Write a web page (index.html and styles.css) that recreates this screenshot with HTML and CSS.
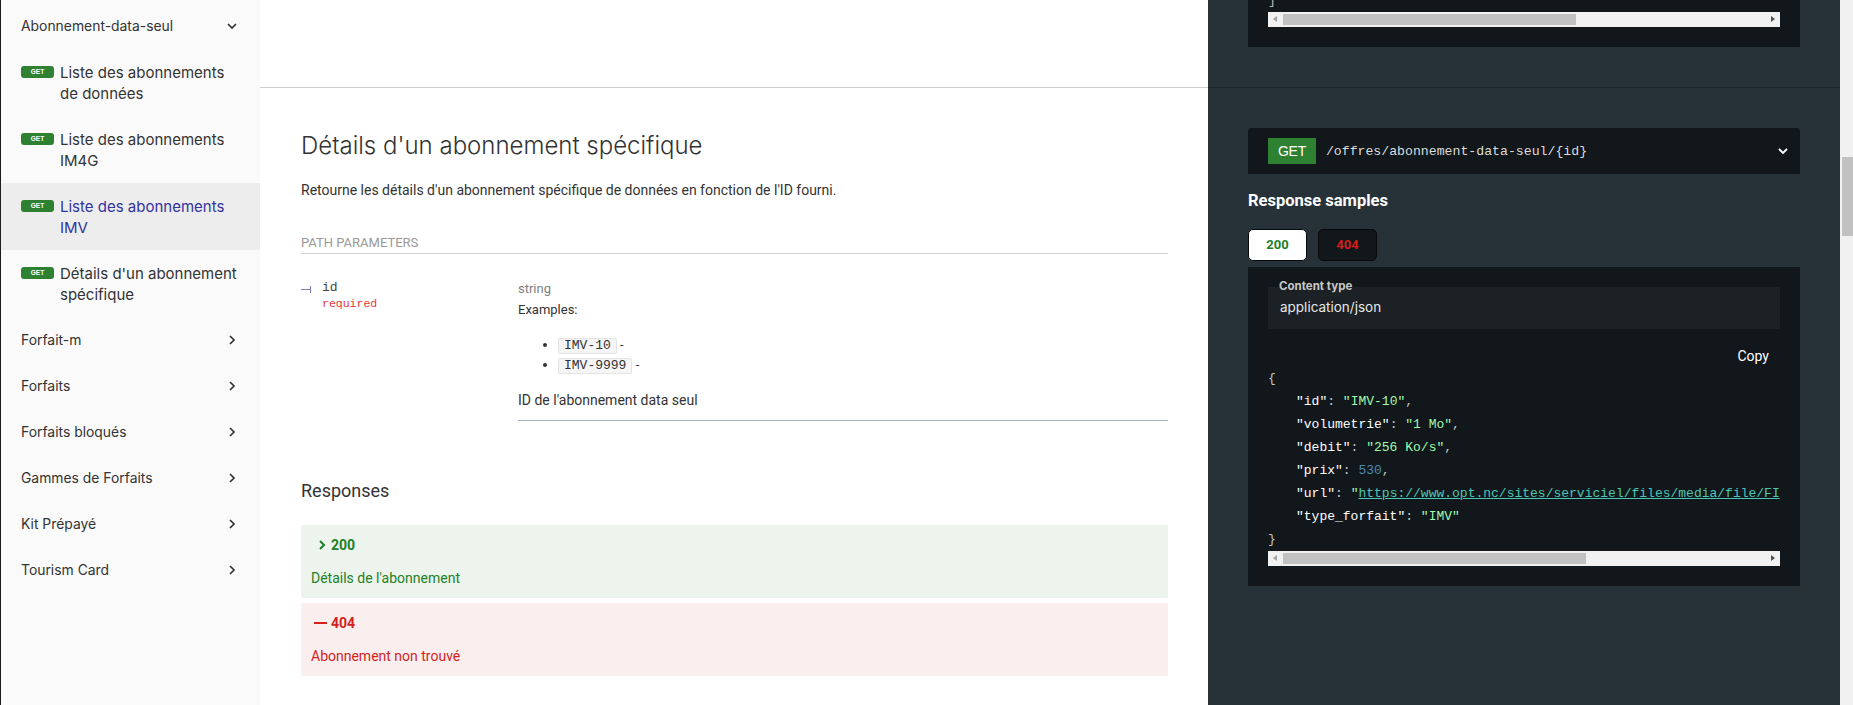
FILE: index.html
```html
<!DOCTYPE html>
<html lang="fr">
<head>
<meta charset="utf-8">
<title>Abonnement-data-seul</title>
<link rel="stylesheet" href="styles.css">
</head>
<body>
<div class="app">
  <nav class="sidebar">
    <ul class="menu">
      <li class="menu-item cat">
        <span class="cat-label">Abonnement-data-seul</span>
        <svg class="shelf" width="10" height="10" viewBox="0 0 10 10"><polyline points="1,3 5,7 9,3" /></svg>
      </li>
      <li class="menu-item op"><span class="badge">GET</span><span class="op-label">Liste des abonnements de données</span></li>
      <li class="menu-item op"><span class="badge">GET</span><span class="op-label">Liste des abonnements IM4G</span></li>
      <li class="menu-item op active"><span class="badge">GET</span><span class="op-label">Liste des abonnements IMV</span></li>
      <li class="menu-item op"><span class="badge">GET</span><span class="op-label">Détails d'un abonnement spécifique</span></li>
      <li class="menu-item cat"><span class="cat-label">Forfait-m</span><svg class="shelf" width="10" height="10" viewBox="0 0 10 10"><polyline points="3,1 7,5 3,9" /></svg></li>
      <li class="menu-item cat"><span class="cat-label">Forfaits</span><svg class="shelf" width="10" height="10" viewBox="0 0 10 10"><polyline points="3,1 7,5 3,9" /></svg></li>
      <li class="menu-item cat"><span class="cat-label">Forfaits bloqués</span><svg class="shelf" width="10" height="10" viewBox="0 0 10 10"><polyline points="3,1 7,5 3,9" /></svg></li>
      <li class="menu-item cat"><span class="cat-label">Gammes de Forfaits</span><svg class="shelf" width="10" height="10" viewBox="0 0 10 10"><polyline points="3,1 7,5 3,9" /></svg></li>
      <li class="menu-item cat"><span class="cat-label">Kit Prépayé</span><svg class="shelf" width="10" height="10" viewBox="0 0 10 10"><polyline points="3,1 7,5 3,9" /></svg></li>
      <li class="menu-item cat"><span class="cat-label">Tourism Card</span><svg class="shelf" width="10" height="10" viewBox="0 0 10 10"><polyline points="3,1 7,5 3,9" /></svg></li>
    </ul>
  </nav>

  <main class="content">
    <section class="row row-prev">
      <div class="mid"></div>
      <div class="right">
        <div class="code-box prev-box">
          <div class="code-end"><span>]</span></div>
          <div class="hscroll">
            <span class="arrow arrow-left"></span>
            <div class="track"><div class="thumb thumb-prev"></div></div>
            <span class="arrow arrow-right"></span>
          </div>
        </div>
      </div>
    </section>

    <section class="row row-op">
      <div class="mid">
        <h2 class="op-title">Détails d'un abonnement spécifique</h2>
        <p class="op-desc">Retourne les détails d'un abonnement spécifique de données en fonction de l'ID fourni.</p>

        <h5 class="params-title">Path Parameters</h5>
        <div class="param">
          <div class="param-name">
            <span class="bullet"></span>
            <div class="name-text">
              <span class="pname">id</span>
              <span class="required">required</span>
            </div>
          </div>
          <div class="param-details">
            <div class="ptype">string</div>
            <div class="examples-label">Examples:</div>
            <ul class="examples">
              <li><code class="chip">IMV-10</code> -</li>
              <li><code class="chip">IMV-9999</code> -</li>
            </ul>
            <p class="pdesc">ID de l'abonnement data seul</p>
          </div>
        </div>

        <h3 class="responses-title">Responses</h3>
        <div class="resp resp-ok">
          <div class="resp-head">
            <svg class="resp-chev" width="8" height="12" viewBox="0 0 8 12"><polyline points="2,2 6,6 2,10" /></svg>
            <strong>200</strong>
          </div>
          <p class="resp-desc">Détails de l'abonnement</p>
        </div>
        <div class="resp resp-err">
          <div class="resp-head">
            <span class="resp-dash"></span>
            <strong>404</strong>
          </div>
          <p class="resp-desc">Abonnement non trouvé</p>
        </div>
      </div>

      <div class="right">
        <div class="endpoint">
          <span class="http-verb">GET</span>
          <span class="endpoint-path">/offres/abonnement-data-seul/{id}</span>
          <svg class="endpoint-chev" width="12" height="12" viewBox="0 0 12 12"><polyline points="2,4 6,8 10,4" /></svg>
        </div>

        <h3 class="samples-title">Response samples</h3>
        <ul class="tabs">
          <li class="tab tab-ok selected">200</li>
          <li class="tab tab-err">404</li>
        </ul>

        <div class="code-box sample-box">
          <div class="ctype">
            <span class="ctype-label">Content type</span>
            <span class="ctype-value">application/json</span>
          </div>
          <div class="copy-row"><span class="copy">Copy</span></div>
          <div class="json">
            <div class="jl"><span class="p">{</span></div>
            <div class="jl ind"><span class="k">"id"</span><span class="p">: </span><span class="s">"IMV-10"</span><span class="p">,</span></div>
            <div class="jl ind"><span class="k">"volumetrie"</span><span class="p">: </span><span class="s">"1 Mo"</span><span class="p">,</span></div>
            <div class="jl ind"><span class="k">"debit"</span><span class="p">: </span><span class="s">"256 Ko/s"</span><span class="p">,</span></div>
            <div class="jl ind"><span class="k">"prix"</span><span class="p">: </span><span class="n">530</span><span class="p">,</span></div>
            <div class="jl ind"><span class="k">"url"</span><span class="p">: </span><span class="s">"</span><a class="lnk">https://www.opt.nc/sites/serviciel/files/media/file/FI</a></div>
            <div class="jl ind"><span class="k">"type_forfait"</span><span class="p">: </span><span class="s">"IMV"</span></div>
            <div class="jl"><span class="p">}</span></div>
          </div>
          <div class="hscroll">
            <span class="arrow arrow-left"></span>
            <div class="track"><div class="thumb thumb-cur"></div></div>
            <span class="arrow arrow-right"></span>
          </div>
        </div>
      </div>
    </section>
  </main>

  <div class="vscroll"><div class="vthumb"></div></div>
</div>
</body>
</html>
```

FILE: styles.css
```css
* { box-sizing: border-box; }

html, body {
  margin: 0;
  padding: 0;
}

body {
  width: 1853px;
  height: 705px;
  overflow: hidden;
  font-family: Roboto, "Liberation Sans", sans-serif;
  font-size: 14px;
  color: #333;
  background: #fff;
}

.app {
  display: flex;
  height: 705px;
}

/* ---------- Sidebar ---------- */
.sidebar {
  flex: 0 0 260px;
  background: #fafafa;
  border-left: 1px solid #1c1c1c;
  padding-top: 3px;
  overflow: hidden;
}

.menu {
  list-style: none;
  margin: 0;
  padding: 0;
}

.menu-item {
  display: flex;
  align-items: flex-start;
  padding: 12.5px 20px 12.5px 20px;
  font-family: Inter, "Open Sans", sans-serif;
  font-size: 15px;
  line-height: 21px;
  color: #333;
}

.menu-item.cat {
  justify-content: space-between;
  align-items: center;
  font-size: 13.9px;
  padding-right: 23px;
}

.menu-item.active {
  background: #ededed;
  color: #32329f;
}

.shelf {
  flex: 0 0 auto;
}

.shelf polyline {
  fill: none;
  stroke: #333;
  stroke-width: 1.7;
}

.badge {
  flex: 0 0 33px;
  height: 12px;
  margin-top: 4px;
  margin-right: 6px;
  background: #2f8132;
  color: #fff;
  border-radius: 3px;
  font-family: "Liberation Sans", sans-serif;
  font-size: 6.5px;
  font-weight: bold;
  line-height: 12px;
  text-align: center;
}

.op-label {
  flex: 1 1 auto;
}

/* ---------- Content ---------- */
.content {
  flex: 0 0 1580px;
  min-width: 0;
  display: flex;
  flex-direction: column;
}

.row {
  display: flex;
  min-width: 0;
}

.mid {
  flex: 0 0 948px;
  min-width: 0;
  background: #fff;
  padding: 40px 40px 40px 41px;
}

.right {
  flex: 0 0 632px;
  min-width: 0;
  background: #263238;
  padding: 40px;
  color: #fff;
}

.row-prev {
  flex: 0 0 88px;
}

.row-prev .mid {
  padding: 0;
  border-bottom: 1px solid #cccccc;
}

.row-prev .right {
  padding: 0 40px;
  border-bottom: 1px solid #1e282d;
}

.row-op {
  flex: 1 1 auto;
  min-height: 0;
}

/* middle op */
.op-title {
  margin: 0;
  font-family: Inter, "Open Sans", sans-serif;
  font-weight: 300;
  font-size: 24px;
  line-height: 35px;
  color: #333;
}

.op-desc {
  margin: 17px 0 0;
  font-size: 14px;
  line-height: 21px;
}

.params-title {
  margin: 32px 0 0;
  font-size: 13px;
  font-weight: normal;
  text-transform: uppercase;
  color: #999;
  line-height: 20px;
  border-bottom: 1px solid #d0d0d0;
}

.param {
  display: flex;
  margin-top: 14px;
}

.param-name {
  flex: 0 0 217px;
  display: flex;
  align-items: flex-start;
  padding-top: 11px;
}

.bullet {
  position: relative;
  flex: 0 0 10px;
  height: 1px;
  margin-top: 10px;
  background: #7c7cbb;
}

.bullet::after {
  content: "";
  position: absolute;
  right: 0;
  top: -3px;
  width: 1px;
  height: 7px;
  background: #7c7cbb;
}

.name-text {
  display: flex;
  flex-direction: column;
  margin-left: 11px;
}

.pname {
  font-family: "Liberation Mono", monospace;
  font-size: 13px;
  line-height: 18px;
  color: #444;
}

.required {
  font-family: "Liberation Mono", monospace;
  font-size: 11.5px;
  line-height: 14px;
  color: #e53935;
}

.param-details {
  flex: 1 1 auto;
  padding: 11px 0 10px;
  border-bottom: 1px solid #9fb4be;
}

.ptype {
  font-size: 13px;
  line-height: 20px;
  color: #808080;
}

.examples-label {
  font-size: 13px;
  line-height: 22px;
  color: #333;
}

.examples {
  margin: 14px 0 0;
  padding-left: 40px;
  font-size: 13px;
  line-height: 20px;
}

.chip {
  display: inline-block;
  font-family: "Liberation Mono", monospace;
  font-size: 13px;
  line-height: 14px;
  padding: 0 5px;
  background: #f5f5f5;
  border: 1px solid #e4e4e4;
  border-radius: 2px;
  color: #333;
}

.pdesc {
  margin: 15px 0 0;
  font-size: 14px;
  line-height: 20px;
}

.responses-title {
  margin: 56px 0 0;
  font-size: 18px;
  font-weight: normal;
  line-height: 28px;
  color: #333;
}

.resp {
  margin-top: 20px;
  padding: 10px;
  border-radius: 2px;
}

.resp + .resp {
  margin-top: 5px;
}

.resp-ok {
  background: #edf4ee;
  color: #1d8127;
}

.resp-err {
  background: #fbeeee;
  color: #d41f1c;
}

.resp-head {
  display: flex;
  align-items: center;
  height: 20px;
  font-size: 14px;
}

.resp-chev {
  margin: 0 5px 0 7px;
}

.resp-chev polyline {
  fill: none;
  stroke: #1d8127;
  stroke-width: 2;
}

.resp-dash {
  display: inline-block;
  width: 13px;
  height: 2px;
  margin: 0 4px 0 3px;
  background: #d41f1c;
}

.resp-desc {
  margin: 13px 0 0;
  font-size: 14px;
  line-height: 20px;
}

/* ---------- Right panel ---------- */
.code-box {
  background: #11171a;
  padding: 0 20px 20px;
}

.code-end {
  height: 12px;
  display: flex;
  align-items: flex-end;
  overflow: hidden;
  font-family: "Liberation Mono", monospace;
  font-size: 13px;
  color: rgba(255, 255, 255, 0.7);
}

.code-end span {
  line-height: 23px;
}

.hscroll {
  display: flex;
  align-items: center;
  height: 15px;
  background: #f1f1f1;
}

.arrow {
  flex: 0 0 15px;
  height: 15px;
  position: relative;
}

.arrow::after {
  content: "";
  position: absolute;
  top: 4px;
  width: 0;
  height: 0;
  border-top: 3.5px solid transparent;
  border-bottom: 3.5px solid transparent;
}

.arrow-left::after {
  left: 5px;
  border-right: 4px solid #a3a3a3;
}

.arrow-right::after {
  left: 6px;
  border-left: 4px solid #505050;
}

.track {
  flex: 1 1 auto;
  height: 15px;
  padding: 2px 0;
}

.thumb {
  height: 11px;
  background: #c1c1c1;
}

.thumb-prev { width: 293px; }
.thumb-cur { width: 303px; }

.endpoint {
  display: flex;
  align-items: center;
  height: 46px;
  padding: 10px 11px 10px 20px;
  background: #11171a;
  border-radius: 4px 4px 0 0;
}

.http-verb {
  height: 26px;
  padding: 0 10px;
  background: #2f8132;
  color: #fff;
  font-family: "Liberation Sans", sans-serif;
  font-size: 14px;
  line-height: 26px;
  letter-spacing: -0.3px;
}

.endpoint-path {
  margin-left: 10px;
  flex: 1 1 auto;
  font-family: "Liberation Mono", monospace;
  font-size: 13.2px;
  color: #ddd;
}

.endpoint-chev polyline {
  fill: none;
  stroke: #fff;
  stroke-width: 1.8;
}

.samples-title {
  margin: 16px 0 0;
  font-size: 16.5px;
  font-weight: bold;
  line-height: 22px;
  color: #fff;
}

.tabs {
  list-style: none;
  display: flex;
  gap: 11px;
  margin: 17px 0 0;
  padding: 0;
}

.tab {
  width: 59px;
  height: 32px;
  border: 1px solid #07090b;
  border-radius: 5px;
  background: #11171a;
  font-size: 13px;
  font-weight: bold;
  line-height: 30px;
  text-align: center;
}

.tab.selected {
  background: #fff;
}

.tab-ok { color: #1d8127; }
.tab-err { color: #d41f1c; }

.sample-box {
  margin-top: 6px;
  padding-top: 20px;
}

.ctype {
  position: relative;
  height: 42px;
  background: #1b2125;
  padding: 10px 12px 0;
}

.ctype-label {
  position: absolute;
  left: 11px;
  top: -8px;
  font-family: Inter, "Open Sans", sans-serif;
  font-size: 11.5px;
  font-weight: 700;
  line-height: 14px;
  color: #c8c8c8;
}

.ctype-value {
  font-family: Inter, "Open Sans", sans-serif;
  font-size: 13.5px;
  line-height: 20px;
  color: #e6e6e6;
}

.copy-row {
  display: flex;
  justify-content: flex-end;
  margin-top: 17px;
  height: 21px;
  padding-right: 11px;
}

.copy {
  font-size: 14px;
  line-height: 20px;
  color: #fff;
}

.json {
  font-family: "Liberation Mono", monospace;
  font-size: 13px;
  line-height: 23px;
  white-space: nowrap;
  overflow: hidden;
  color: #fff;
}

.jl.ind {
  padding-left: 28px;
}

.json .p { color: rgba(255, 255, 255, 0.75); }
.json .k { color: #fff; }
.json .s { color: #a0fbaa; }
.json .n { color: #4a8bb3; }
.json .lnk {
  color: #4cc7b5;
  text-decoration: underline;
}

/* page scrollbar */
.vscroll {
  flex: 0 0 13px;
  background: #f1f1f1;
  padding-top: 157px;
}

.vthumb {
  height: 79px;
  margin-left: 2px;
  background: #c1c1c1;
}
```
